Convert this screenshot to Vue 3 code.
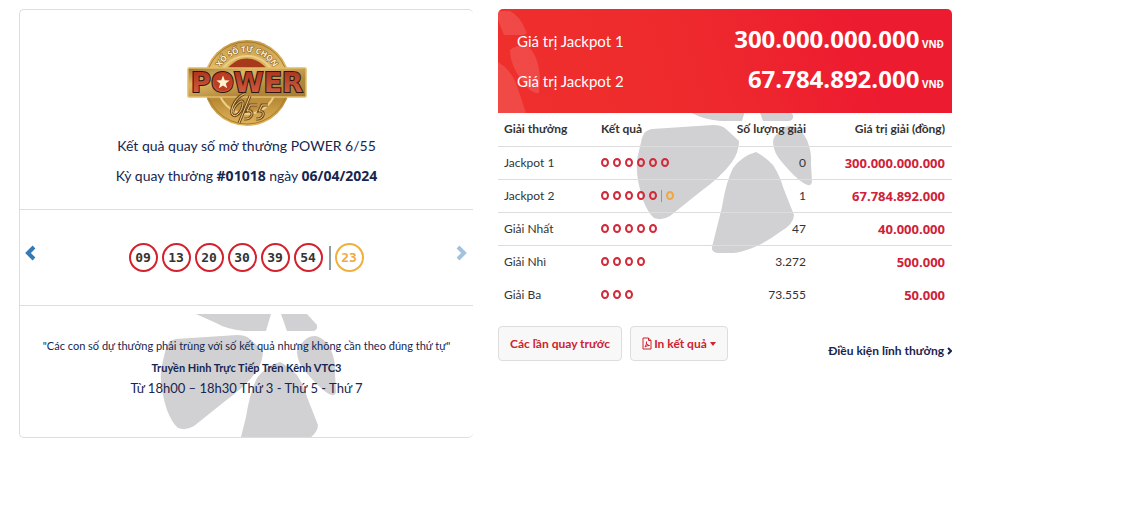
<script setup>
const balls = ['09', '13', '20', '30', '39', '54']
const bonus = '23'

const jackpots = [
  { label: 'Giá trị Jackpot 1', value: '300.000.000.000' },
  { label: 'Giá trị Jackpot 2', value: '67.784.892.000' },
]

const prizes = [
  { name: 'Jackpot 1', match: 6, extra: false, count: '0', value: '300.000.000.000' },
  { name: 'Jackpot 2', match: 5, extra: true, count: '1', value: '67.784.892.000' },
  { name: 'Giải Nhất', match: 5, extra: false, count: '47', value: '40.000.000' },
  { name: 'Giải Nhì', match: 4, extra: false, count: '3.272', value: '500.000' },
  { name: 'Giải Ba', match: 3, extra: false, count: '73.555', value: '50.000' },
]

// Petals of the flower mark shared by both cards
const petals = [
  'M42 4 H117 L112 21 H90 Q72 19 62 13 Z',
  'M127 4 H153 L163 15 Q164 21 158 21 H133 Z',
  'M12 38 Q14 30 22 29 L83 25 Q92 25 96 29 L109 41 Q109 52 102 62 Q92 76 70 92 L40 116 Q32 121 24 118 Q18 113 13 100 Q4 72 8 55 Z',
  'M126 52 Q134 56 143 65 Q150 76 153 87 L164 115 Q164 124 150 132 Q126 150 104 153 L89 153 Q81 153 82 147 L92 107 Q96 82 103 68 Q112 56 126 52 Z',
  'M143 43 Q143 37 148 33 Q154 25 162 26 Q171 28 177 40 Q182 52 181 64 L182 82 Q181 87 175 84 Q166 79 151 61 Q144 53 143 43 Z',
]
</script>

<template>
  <main class="page">
    <section class="card draw">
      <header class="draw-head">
        <svg class="logo" viewBox="0 0 120 88" role="img" aria-label="Power 6/55">
          <defs>
            <linearGradient id="gold" x1="0" y1="0" x2="0" y2="1">
              <stop offset="0" stop-color="#c79a45" />
              <stop offset="0.35" stop-color="#e3bf6c" />
              <stop offset="0.7" stop-color="#b98a36" />
              <stop offset="1" stop-color="#e2b75c" />
            </linearGradient>
            <linearGradient id="bar" x1="0" y1="0" x2="1" y2="1">
              <stop offset="0" stop-color="#9c732b" />
              <stop offset="0.3" stop-color="#dcb766" />
              <stop offset="0.65" stop-color="#b58a3d" />
              <stop offset="1" stop-color="#a67a30" />
            </linearGradient>
            <linearGradient id="red" x1="0" y1="0" x2="0" y2="1">
              <stop offset="0" stop-color="#a82c18" />
              <stop offset="1" stop-color="#d9664a" />
            </linearGradient>
            <path id="arc" d="M29 44 A31 31 0 0 1 91 44" />
          </defs>
          <circle cx="60" cy="44" r="43" fill="url(#gold)" />
          <circle cx="60" cy="44" r="41" fill="none" stroke="#a87a2c" stroke-width="1" />
          <circle cx="60" cy="46" r="29" fill="none" stroke="#edcf85" stroke-width="2" />
          <circle cx="60" cy="46" r="26" fill="#bd8f3d" />
          <path d="M39 32 A24 24 0 0 1 81 32 Z" fill="#a63a1b" />
          <text class="logo-arc"><textPath href="#arc" startOffset="50%" text-anchor="middle">XỔ SỐ TỰ CHỌN</textPath></text>
          <rect x="1" y="29" width="118" height="29" rx="1" fill="url(#bar)" stroke="#e1bd6c" stroke-width="1.5" />
          <text class="logo-name" x="60" y="53" text-anchor="middle">POWER</text>
          <circle cx="36" cy="43" r="9" fill="#bd3e22" />
          <path d="M36 36.500 L37.800 41.200 L42.600 41.400 L38.800 44.500 L40.200 49.300 L36 46.500 L31.800 49.300 L33.200 44.500 L29.400 41.400 L34.200 41.200 Z" fill="#fff2cf" />
          <g class="logo-script" fill="none">
            <path d="M57 55 C49 58 43 70 45 75 C48 80 55 73 56 65 C57 57 46 67 46 73 M63 57 L52 84" />
            <path d="M70 66 H63 L60 72 C68 70 66 81 57 80 M81 66 H75 L72 72 C79 71 77 81 69 80" />
          </g>
          <g class="logo-shine" fill="none">
            <path d="M57 55 C49 58 43 70 45 75 C48 80 55 73 56 65 C57 57 46 67 46 73 M63 57 L52 84" />
            <path d="M70 66 H63 L60 72 C68 70 66 81 57 80 M81 66 H75 L72 72 C79 71 77 81 69 80" />
          </g>
        </svg>
        <h1 class="title">Kết quả quay số mở thưởng POWER 6/55</h1>
        <p class="period">Kỳ quay thưởng <b>#01018</b> ngày <b>06/04/2024</b></p>
      </header>

      <div class="numbers">
        <button class="arrow" type="button" aria-label="Kỳ trước">
          <svg viewBox="0 0 12 16"><path d="M10 2 L4 8 L10 14" /></svg>
        </button>
        <div class="balls">
          <span v-for="n in balls" :key="n" class="ball">{{ n }}</span>
          <i class="bar"></i>
          <span class="ball bonus">{{ bonus }}</span>
        </div>
        <button class="arrow" type="button" aria-label="Kỳ sau" disabled>
          <svg viewBox="0 0 12 16"><path d="M2 2 L8 8 L2 14" /></svg>
        </button>
      </div>

      <footer class="draw-foot">
        <svg class="mark mark-left" viewBox="6 4 177 123" aria-hidden="true">
          <path v-for="d in petals" :key="d" :d="d" />
        </svg>
        <p class="note">"Các con số dự thưởng phải trùng với số kết quả nhưng không cần theo đúng thứ tự"</p>
        <p class="live">Truyền Hình Trực Tiếp Trên Kênh VTC3</p>
        <p class="hours">Từ 18h00 – 18h30 Thứ 3 - Thứ 5 - Thứ 7</p>
      </footer>
    </section>

    <section class="results">
      <div class="jackpots">
        <svg class="hero-mark" viewBox="0 0 50 104" aria-hidden="true">
          <path d="M0 2 H12 Q22 7 28 22 Q30 26 24 26 H6 Q1 14 0 10 Z" />
          <path d="M12 41 Q18 36 28 36 Q40 44 42 68 L41 84 Q34 86 24 72 Q12 56 12 41 Z" />
          <path d="M0 53 Q12 60 18 74 L28 104 H0 Z" />
        </svg>
        <div v-for="j in jackpots" :key="j.label" class="jackpot">
          <span>{{ j.label }}</span>
          <span><b class="amount">{{ j.value }}</b><b class="unit"> VNĐ</b></span>
        </div>
      </div>

      <div class="table-wrap">
        <svg class="mark mark-right" viewBox="6 13 177 141" aria-hidden="true">
          <path v-for="d in petals" :key="d" :d="d" />
        </svg>
        <table>
          <thead>
            <tr>
              <th>Giải thưởng</th>
              <th>Kết quả</th>
              <th class="num">Số lượng giải</th>
              <th class="num">Giá trị giải (đồng)</th>
            </tr>
          </thead>
          <tbody>
            <tr v-for="p in prizes" :key="p.name">
              <td>{{ p.name }}</td>
              <td>
                <span class="match">
                  <i v-for="n in p.match" :key="n" class="ring"></i>
                  <template v-if="p.extra"><i class="tick"></i><i class="ring gold"></i></template>
                </span>
              </td>
              <td class="num">{{ p.count }}</td>
              <td class="num value">{{ p.value }}</td>
            </tr>
          </tbody>
        </table>
      </div>

      <div class="actions">
        <button class="btn" type="button">Các lần quay trước</button>
        <button class="btn" type="button">
          <svg class="pdf" viewBox="0 0 10 13" aria-hidden="true">
            <path d="M1 1 H6.500 L9 3.500 V12 H1 Z M6.500 1 V3.500 H9" />
            <path d="M4.500 4.500 Q5 7 3 10 M4.600 6.500 Q5.500 8.500 7.500 8.500 Q5 8.300 3 10" />
          </svg>In kết quả<i class="caret"></i>
        </button>
        <a class="terms" href="#">Điều kiện lĩnh thưởng
          <svg viewBox="0 0 5 8" aria-hidden="true"><path d="M1 1 L4 4 L1 7" /></svg>
        </a>
      </div>
    </section>
  </main>
</template>

<style>
body {
  background: #fff;
}
</style>

<style scoped>
.page {
  display: grid;
  grid-template-columns: 1fr 1fr;
  align-items: start;
  gap: 25px;
  padding: 9px 192px 0 19px;
  font-family: Lato, "Noto Sans", sans-serif;
  font-size: 14px;
  line-height: 20px;
  color: #333;
}
p,
h1 {
  margin: 0;
}
b,
.value {
  font-family: "Open Sans", "Noto Sans", sans-serif;
}
.card {
  border: 1px solid #ddd;
  border-right: 0;
  border-radius: 5px;
  color: #17264f;
}
.draw-head {
  display: flex;
  flex-direction: column;
  align-items: center;
  padding: 29px 0 23px;
}
.logo {
  width: 120px;
  height: 88px;
}
.logo-arc {
  font: bold 8px "Open Sans", sans-serif;
  fill: #fff3cd;
  stroke: #80571f;
  stroke-width: 1;
  paint-order: stroke;
}
.logo-name {
  font: bold 27px "DejaVu Sans", sans-serif;
  fill: url(#red);
  stroke: #2b1611;
  stroke-width: 2;
  paint-order: stroke;
}
.logo-script path {
  stroke: #6f481b;
  stroke-width: 3;
}
.logo-shine path {
  stroke: #f0d089;
  stroke-width: 1;
}
.title {
  margin-top: 9px;
  font-size: 14px;
  font-weight: 400;
}
.period {
  margin-top: 10px;
}
.numbers {
  display: flex;
  align-items: center;
  justify-content: space-between;
  padding: 33px 5px 33px 4px;
  border: solid #ddd;
  border-width: 1px 0;
}
.arrow {
  display: flex;
  padding: 0;
  margin-bottom: 10px;
  border: 0;
  background: none;
}
.arrow svg {
  width: 12px;
  height: 16px;
  fill: none;
  stroke: #337ab7;
  stroke-width: 4;
}
.arrow:disabled {
  opacity: 0.45;
}
.balls {
  display: flex;
  align-items: center;
  gap: 4px;
}
.ball {
  box-sizing: border-box;
  width: 29px;
  height: 29px;
  border: 2px solid #d3222e;
  border-radius: 50%;
  font: bold 13px/25px "DejaVu Sans Mono", monospace;
  text-align: center;
  color: #333;
}
.bonus {
  border-color: #f0b03f;
  color: #eeac3d;
}
.bar {
  width: 2px;
  height: 24px;
  margin-left: 2px;
  background: #8aa09b;
}
.draw-foot {
  position: relative;
  padding: 30px 0 39px;
  text-align: center;
}
.mark {
  position: absolute;
  width: 177px;
  fill: #d1d1d3;
}
.mark-left {
  left: 140px;
  bottom: 0;
  height: 123px;
}
.mark-right {
  left: 138px;
  top: 0;
  height: 141px;
}
.note,
.live,
.hours {
  position: relative;
}
.note {
  font-size: 11px;
  white-space: nowrap;
}
.live {
  margin-top: 2px;
  font-size: 11px;
  font-weight: 700;
}
.hours {
  font-size: 13px;
}
.jackpots {
  position: relative;
  padding: 12px 8px 12px 19px;
  border-radius: 5px 5px 0 0;
  background: linear-gradient(75deg, #ee302c, #ee292d 45%, #ed1b30 80%);
  color: #fff;
}
.hero-mark {
  position: absolute;
  left: 0;
  top: 0;
  width: 50px;
  height: 104px;
  fill: #fff;
  opacity: 0.12;
}
.jackpot {
  position: relative;
  display: flex;
  align-items: center;
  justify-content: space-between;
  height: 40px;
  font-size: 15px;
}
.amount {
  font-size: 24px;
}
.unit {
  font-size: 10px;
}
.table-wrap {
  position: relative;
}
table {
  position: relative;
  width: 100%;
  table-layout: fixed;
  border-collapse: collapse;
}
th,
td {
  box-sizing: border-box;
  height: 33px;
  padding: 0 7px 0 6px;
  font-size: 12px;
  text-align: left;
}
th:nth-child(1) {
  width: 97px;
}
th:nth-child(2) {
  width: 110px;
}
th:nth-child(3) {
  width: 108px;
}
thead tr,
tbody tr:nth-child(-n + 3) {
  border-bottom: 1px solid #ddd;
}
th.num,
td.num {
  text-align: right;
}
td.value {
  font-weight: 700;
  font-size: 13px;
  color: #cf2138;
}
.match {
  display: flex;
  align-items: center;
  gap: 4px;
}
.ring {
  box-sizing: border-box;
  width: 8px;
  height: 9px;
  border: 2px solid #d22a3a;
  border-radius: 50%;
}
.ring.gold {
  border-color: #f0a742;
}
.tick {
  width: 1px;
  height: 12px;
  background: #e0803e;
}
.actions {
  display: flex;
  align-items: flex-start;
  gap: 8px;
  padding-top: 15px;
}
.btn {
  display: flex;
  align-items: center;
  height: 35px;
  padding: 0 11px;
  border: 1px solid #ddd;
  border-radius: 4px;
  background: #f8f8f8;
  font: bold 12px/20px Lato, "Noto Sans", sans-serif;
  color: #d0212f;
}
.pdf {
  width: 10px;
  height: 13px;
  margin-right: 2px;
  fill: none;
  stroke: #d0212f;
}
.caret {
  margin-left: 3px;
  border: solid transparent;
  border-width: 4px 3px 0;
  border-top-color: #d0212f;
}
.terms {
  margin: 15px 0 0 auto;
  font-size: 12px;
  font-weight: 700;
  text-decoration: none;
  color: #17264f;
}
.terms svg {
  width: 5px;
  height: 8px;
  fill: none;
  stroke: #17264f;
  stroke-width: 2;
}
</style>
